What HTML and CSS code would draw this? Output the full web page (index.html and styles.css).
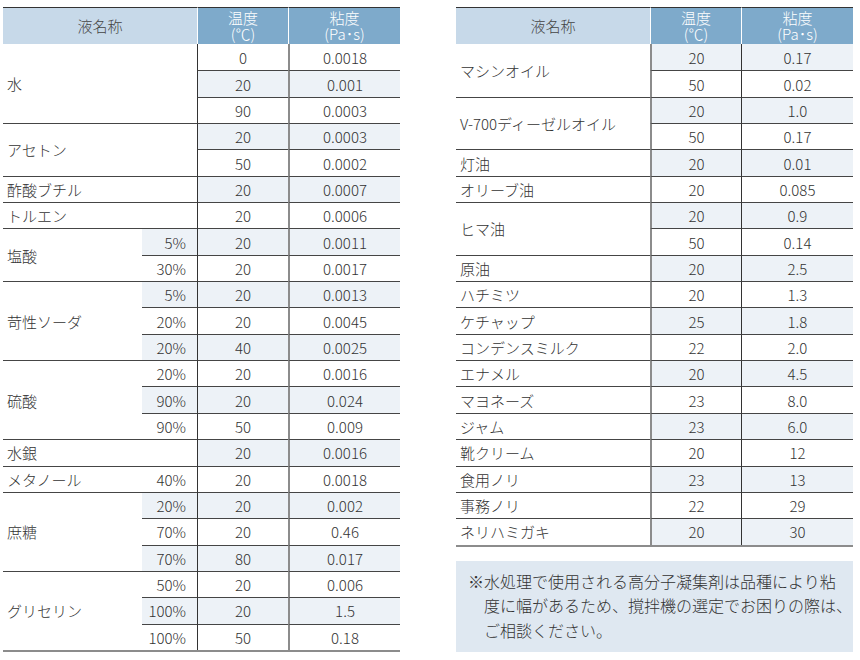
FILE: index.html
```html
<!DOCTYPE html>
<html lang="ja">
<head>
<meta charset="utf-8">
<title>液体の粘度表</title>
<link rel="stylesheet" href="styles.css">
</head>
<body>
<div class="page">
  <div class="col">
    <table class="vt vt-left">
      <colgroup><col class="w-name"><col class="w-conc"><col class="w-temp"><col class="w-visc"></colgroup>
      <thead>
        <tr><th colspan="2" class="h-name">液名称</th><th class="h-blue"><span class="hl">温度</span><span class="hl">(℃)</span></th><th class="h-blue"><span class="hl">粘度</span><span class="hl">(Pa･s)</span></th></tr>
      </thead>
      <tbody>
        <tr><td class="name" rowspan="3" colspan="2">水</td><td>0</td><td>0.0018</td></tr>
        <tr class="alt"><td>20</td><td>0.001</td></tr>
        <tr><td>90</td><td>0.0003</td></tr>
        <tr class="alt"><td class="name" rowspan="2" colspan="2">アセトン</td><td>20</td><td>0.0003</td></tr>
        <tr><td>50</td><td>0.0002</td></tr>
        <tr class="alt"><td class="name" colspan="2">酢酸ブチル</td><td>20</td><td>0.0007</td></tr>
        <tr><td class="name" colspan="2">トルエン</td><td>20</td><td>0.0006</td></tr>
        <tr class="alt"><td class="name" rowspan="2">塩酸</td><td class="conc">5%</td><td>20</td><td>0.0011</td></tr>
        <tr><td class="conc">30%</td><td>20</td><td>0.0017</td></tr>
        <tr class="alt"><td class="name" rowspan="3">苛性ソーダ</td><td class="conc">5%</td><td>20</td><td>0.0013</td></tr>
        <tr><td class="conc">20%</td><td>20</td><td>0.0045</td></tr>
        <tr class="alt"><td class="conc">20%</td><td>40</td><td>0.0025</td></tr>
        <tr><td class="name" rowspan="3">硫酸</td><td class="conc">20%</td><td>20</td><td>0.0016</td></tr>
        <tr class="alt"><td class="conc">90%</td><td>20</td><td>0.024</td></tr>
        <tr><td class="conc">90%</td><td>50</td><td>0.009</td></tr>
        <tr class="alt"><td class="name" colspan="2">水銀</td><td>20</td><td>0.0016</td></tr>
        <tr><td class="name">メタノール</td><td class="conc">40%</td><td>20</td><td>0.0018</td></tr>
        <tr class="alt"><td class="name" rowspan="3">庶糖</td><td class="conc">20%</td><td>20</td><td>0.002</td></tr>
        <tr><td class="conc">70%</td><td>20</td><td>0.46</td></tr>
        <tr class="alt"><td class="conc">70%</td><td>80</td><td>0.017</td></tr>
        <tr><td class="name" rowspan="3">グリセリン</td><td class="conc">50%</td><td>20</td><td>0.006</td></tr>
        <tr class="alt"><td class="conc">100%</td><td>20</td><td>1.5</td></tr>
        <tr><td class="conc">100%</td><td>50</td><td>0.18</td></tr>
      </tbody>
    </table>
  </div>
  <div class="col">
    <table class="vt vt-right">
      <colgroup><col class="w-name-r"><col class="w-temp"><col class="w-visc"></colgroup>
      <thead>
        <tr><th class="h-name">液名称</th><th class="h-blue"><span class="hl">温度</span><span class="hl">(℃)</span></th><th class="h-blue"><span class="hl">粘度</span><span class="hl">(Pa･s)</span></th></tr>
      </thead>
      <tbody>
        <tr class="alt"><td class="name" rowspan="2">マシンオイル</td><td>20</td><td>0.17</td></tr>
        <tr><td>50</td><td>0.02</td></tr>
        <tr class="alt"><td class="name" rowspan="2">V-700ディーゼルオイル</td><td>20</td><td>1.0</td></tr>
        <tr><td>50</td><td>0.17</td></tr>
        <tr class="alt"><td class="name">灯油</td><td>20</td><td>0.01</td></tr>
        <tr><td class="name">オリーブ油</td><td>20</td><td>0.085</td></tr>
        <tr class="alt"><td class="name" rowspan="2">ヒマ油</td><td>20</td><td>0.9</td></tr>
        <tr><td>50</td><td>0.14</td></tr>
        <tr class="alt"><td class="name">原油</td><td>20</td><td>2.5</td></tr>
        <tr><td class="name">ハチミツ</td><td>20</td><td>1.3</td></tr>
        <tr class="alt"><td class="name">ケチャップ</td><td>25</td><td>1.8</td></tr>
        <tr><td class="name">コンデンスミルク</td><td>22</td><td>2.0</td></tr>
        <tr class="alt"><td class="name">エナメル</td><td>20</td><td>4.5</td></tr>
        <tr><td class="name">マヨネーズ</td><td>23</td><td>8.0</td></tr>
        <tr class="alt"><td class="name">ジャム</td><td>23</td><td>6.0</td></tr>
        <tr><td class="name">靴クリーム</td><td>20</td><td>12</td></tr>
        <tr class="alt"><td class="name">食用ノリ</td><td>23</td><td>13</td></tr>
        <tr><td class="name">事務ノリ</td><td>22</td><td>29</td></tr>
        <tr class="alt"><td class="name">ネリハミガキ</td><td>20</td><td>30</td></tr>
      </tbody>
    </table>
    <p class="note">※水処理で使用される高分子凝集剤は品種により粘<br>度に幅があるため、撹拌機の選定でお困りの際は、<br>ご相談ください。</p>
  </div>
</div>
</body>
</html>
```
FILE: styles.css
```css
* { box-sizing: border-box; }

body {
  margin: 0;
  background: #ffffff;
  color: #333333;
  font-family: "Noto Sans CJK JP", "Noto Sans", sans-serif;
  font-weight: 300;
}

.page {
  display: flex;
  align-items: flex-start;
  gap: 56px;
  padding: 7px 0 0 3px;
}

.col {
  width: 397px;
  display: flex;
  flex-direction: column;
  gap: 14px;
}

.vt {
  width: 397px;
  table-layout: fixed;
  border-collapse: separate;
  border-spacing: 0;
  font-size: 15px;
  border-bottom: 2px solid #8c8c8c;
}

.w-name { width: 139px; }
.w-conc { width: 55px; }
.w-temp { width: 91px; }
.w-visc { width: 112px; }
.w-name-r { width: 194px; }

.vt thead tr { height: 37px; }

.vt th {
  padding: 0;
  border-top: 1px solid #333333;
  font-weight: 300;
  line-height: 16px;
  vertical-align: middle;
  text-align: center;
}

.hl {
  display: block;
  height: 16px;
  line-height: 16px;
  overflow: visible;
}

.h-name {
  background: #c7d9e9;
  color: #444444;
}

.h-blue {
  background: #7eaacb;
  color: #ffffff;
  border-left: 1px solid #ffffff;
}

.vt tbody tr { height: 26.35px; }

.vt td {
  padding: 0;
  line-height: 1;
  text-align: center;
  vertical-align: middle;
}

.vt tbody tr + tr td { border-top: 1px solid #454545; }

.vt td.name {
  text-align: left;
  padding-left: 4px;
}

.vt td.conc {
  text-align: right;
  padding-right: 11px;
}

.vt .alt td:not(.name) { background: #edf2f7; }

.vt-left tbody td:nth-last-child(2) { border-left: 1px solid #333333; }
.vt-left tbody td:last-child { border-left: 2px solid #8c8c8c; }

.vt-right tbody td:nth-last-child(2) { border-left: 2px solid #8c8c8c; }
.vt-right tbody td:last-child { border-left: 1px solid #333333; }

.note {
  margin: 0;
  background: #dfe8f1;
  font-size: 16px;
  line-height: 24.5px;
  padding: 8px 0 10px 28px;
  text-indent: -16px;
  white-space: nowrap;
}
```
